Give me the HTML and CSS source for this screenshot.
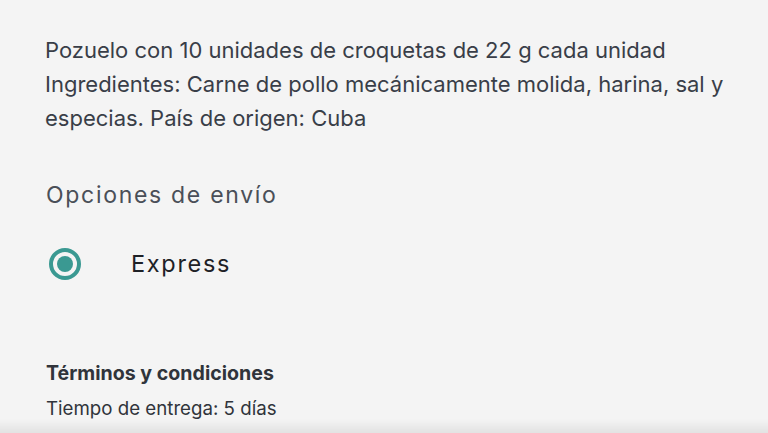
FILE: index.html
```html
<!DOCTYPE html>
<html lang="es">
<head>
<meta charset="utf-8">
<link rel="stylesheet" href="styles.css">
</head>
<body>
<main class="page">
  <p class="desc">Pozuelo con 10 unidades de croquetas de 22 g cada unidad<br>Ingredientes: Carne de pollo mecánicamente molida, harina, sal y especias. País de origen: Cuba</p>
  <h2 class="section-title">Opciones de envío</h2>
  <label class="option">
    <span class="radio"><span class="radio-dot"></span></span>
    <span class="option-label">Express</span>
  </label>
  <h3 class="terms-title">Términos y condiciones</h3>
  <p class="terms-text">Tiempo de entrega: 5 días</p>
</main>
<div class="bottom-shade"></div>
</body>
</html>
```
FILE: styles.css
```css
html, body {
  margin: 0;
  padding: 0;
  height: 100%;
  overflow: hidden;
  background: #f4f4f4;
}
body {
  font-family: Inter, "Noto Sans", sans-serif;
}
.page {
  padding: 33px 30px 0 45px;
  display: flex;
  flex-direction: column;
}
.desc {
  margin: 0;
  font-size: 22px;
  line-height: 34px;
  color: #393e48;
  letter-spacing: 0;
}
.section-title {
  margin: 45px 0 0 1px;
  font-weight: 400;
  font-size: 23px;
  line-height: 30px;
  letter-spacing: 1.7px;
  color: #4a4f58;
}
.option {
  margin-top: 38px;
  display: flex;
  align-items: center;
  gap: 50px;
}
.radio {
  width: 32px;
  height: 32px;
  box-sizing: border-box;
  border: 4px solid #3a9992;
  border-radius: 50%;
  display: flex;
  align-items: center;
  justify-content: center;
  margin-left: 4px;
}
.radio-dot {
  width: 16px;
  height: 16px;
  border-radius: 50%;
  background: #3a9992;
}
.option-label {
  font-size: 23.5px;
  line-height: 30px;
  letter-spacing: 1.7px;
  color: #1e2126;
}
.terms-title {
  margin: 80px 0 0 1px;
  font-size: 19.6px;
  line-height: 26px;
  font-weight: 700;
  color: #30343b;
}
.terms-text {
  margin: 10px 0 0 1px;
  font-size: 18.7px;
  line-height: 26px;
  color: #30343b;
}
.bottom-shade {
  position: fixed;
  left: 0;
  right: 0;
  bottom: 0;
  height: 14px;
  background: linear-gradient(to bottom, rgba(0,0,0,0), rgba(0,0,0,0.07));
}
```
